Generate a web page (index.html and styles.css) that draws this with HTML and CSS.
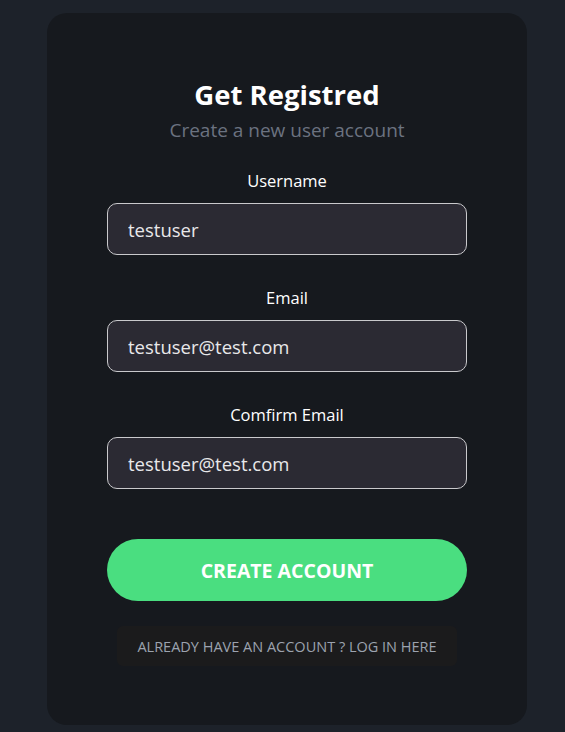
FILE: index.html
```html
<!DOCTYPE html>
<html lang="en">
<head>
<meta charset="utf-8">
<title>Get Registred</title>
<link rel="stylesheet" href="styles.css">
</head>
<body>
<main class="card">
  <h1 class="title">Get Registred</h1>
  <p class="subtitle">Create a new user account</p>
  <form class="form">
    <div class="field">
      <label class="label" for="username">Username</label>
      <input class="input" id="username" type="text" value="testuser">
    </div>
    <div class="field">
      <label class="label" for="email">Email</label>
      <input class="input" id="email" type="text" value="testuser@test.com">
    </div>
    <div class="field">
      <label class="label" for="confirm">Comfirm Email</label>
      <input class="input" id="confirm" type="text" value="testuser@test.com">
    </div>
    <button class="btn" type="button">CREATE ACCOUNT</button>
    <a class="login" href="#">ALREADY HAVE AN ACCOUNT ? LOG IN HERE</a>
  </form>
</main>
</body>
</html>
```
FILE: styles.css
```css
* { box-sizing: border-box; }
html, body { margin: 0; padding: 0; }
body {
  background: #1d222a;
  font-family: "Open Sans", "Noto Sans", sans-serif;
  color: #fff;
  height: 732px;
  padding-top: 13px;
}
.card {
  width: 480px;
  height: 712px;
  margin-left: 47px;
  background: #16191e;
  border-radius: 20px;
  display: flex;
  flex-direction: column;
  align-items: center;
  padding-top: 64px;
}
.title {
  margin: 0;
  font-size: 27.5px;
  font-weight: 700;
  line-height: 36px;
}
.subtitle {
  margin: 4px 0 0;
  color: #6b7280;
  font-size: 19px;
  line-height: 26px;
}
.form {
  width: 360px;
  display: flex;
  flex-direction: column;
  align-items: center;
  margin-top: 27px;
}
.field {
  width: 100%;
  display: flex;
  flex-direction: column;
  align-items: center;
  margin-bottom: 32px;
}
.label {
  font-size: 16.5px;
  line-height: 22px;
  margin-bottom: 11px;
}
.input {
  width: 100%;
  height: 52px;
  background: #2b2a33;
  border: 1px solid #c9c9cc;
  border-radius: 10px;
  color: #e8e8ea;
  font-family: inherit;
  font-size: 18.5px;
  padding: 0 20px;
  outline: none;
}
.btn {
  width: 100%;
  height: 62px;
  margin-top: 18px;
  border: none;
  border-radius: 31px;
  background: #4ade80;
  color: #fff;
  font-family: inherit;
  font-size: 19.5px;
  font-weight: 700;
}
.login {
  margin-top: 25px;
  width: 340px;
  height: 40px;
  display: flex;
  align-items: center;
  justify-content: center;
  background: #1b1b1c;
  border-radius: 6px;
  color: #9ca3af;
  font-size: 14.5px;
  text-decoration: none;
}
```
